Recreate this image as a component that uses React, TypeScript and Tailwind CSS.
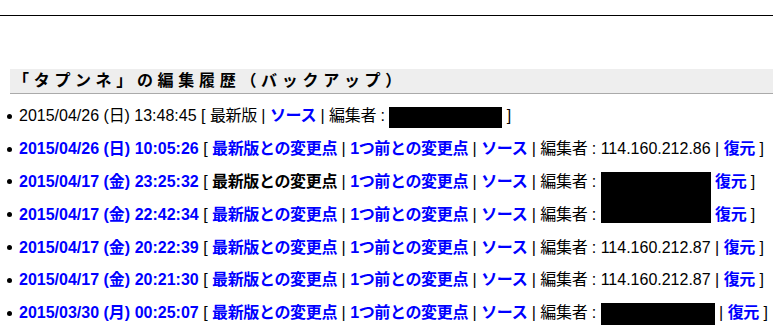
import React from 'react';

const font = "font-['Liberation_Sans','Noto_Sans_CJK_JP',sans-serif]";

// CJK runs are set a touch tighter than Noto's full-width advance
const J = ({ children }: { children: React.ReactNode }) => (
  <span className="tracking-[-0.35px]">{children}</span>
);

const L = ({ children }: { children: React.ReactNode }) => (
  <a className="font-bold text-[#0000ff]">{children}</a>
);

const Redact = ({ w, h, tall }: { w: number; h: number; tall?: boolean }) => (
  <span className="relative inline-block align-middle" style={{ width: w, height: h }}>
    <span
      className="absolute left-0 top-0 bg-black"
      style={{ width: w, height: tall ? h + 29 : h }}
    />
  </span>
);

const Row = ({ children }: { children: React.ReactNode }) => (
  <li className="flex items-center h-[32.8px] whitespace-nowrap">
    <span className="w-[5px] h-[5px] rounded-full bg-black ml-[7px] mr-[7px] shrink-0" />
    <span>{children}</span>
  </li>
);

const Diffs = ({ current }: { current?: boolean }) => (
  <>
    {' [ '}
    {current ? (
      <b className="font-bold"><J>最新版との変更点</J></b>
    ) : (
      <L><J>最新版との変更点</J></L>
    )}
    {' | '}
    <L><J>1つ前との変更点</J></L>
    {' | '}
    <L><J>ソース</J></L>
    {' | '}
    <J>編集者</J>
    {' : '}
  </>
);

const Restore = () => (
  <L><J>復元</J></L>
);

export default function App() {
  return (
    <div className={`${font} text-[16px] text-black bg-white w-[773px] h-[330px] overflow-hidden`}>
      <div className="h-[15px]" />
      <div className="h-px bg-black" />
      <div className="h-[53px]" />
      <h2 className="ml-[10px] h-[25px] bg-[#eeeeee] border-b border-[#aaaaaa] pl-[3px] flex items-center text-[16px] font-bold tracking-[4.7px] leading-none">
        「タプンネ」の編集履歴（バックアップ）
      </h2>
      <ul className="pt-[6px]">
        <Row>
          {'2015/04/26 ('}
          <J>日</J>
          {') 13:48:45 [ '}
          <J>最新版</J>
          {' | '}
          <L><J>ソース</J></L>
          {' | '}
          <J>編集者</J>
          {' : '}
          <Redact w={113} h={21} />
          {' ]'}
        </Row>
        <Row>
          <L>2015/04/26 (日) 10:05:26</L>
          <Diffs />
          {'114.160.212.86 | '}
          <Restore />
          {' ]'}
        </Row>
        <Row>
          <L>2015/04/17 (金) 23:25:32</L>
          <Diffs current />
          <Redact w={110} h={22} tall />
          {' '}
          <Restore />
          {' ]'}
        </Row>
        <Row>
          <L>2015/04/17 (金) 22:42:34</L>
          <Diffs />
          <span className="inline-block w-[110px]" />
          {' '}
          <Restore />
          {' ]'}
        </Row>
        <Row>
          <L>2015/04/17 (金) 20:22:39</L>
          <Diffs />
          {'114.160.212.87 | '}
          <Restore />
          {' ]'}
        </Row>
        <Row>
          <L>2015/04/17 (金) 20:21:30</L>
          <Diffs />
          {'114.160.212.87 | '}
          <Restore />
          {' ]'}
        </Row>
        <Row>
          <L>2015/03/30 (月) 00:25:07</L>
          <Diffs />
          <Redact w={114} h={22} />
          {' | '}
          <Restore />
          {' ]'}
        </Row>
      </ul>
    </div>
  );
}
